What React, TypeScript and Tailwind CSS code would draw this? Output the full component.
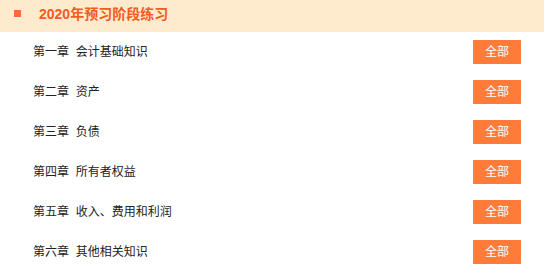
import React from "react";

const chapters = [
  "第一章  会计基础知识",
  "第二章  资产",
  "第三章  负债",
  "第四章  所有者权益",
  "第五章  收入、费用和利润",
  "第六章  其他相关知识",
];

export default function App() {
  return (
    <div
      className="w-[544px] h-[267px] bg-white overflow-hidden"
      style={{ fontFamily: '"Liberation Sans", "Noto Sans CJK SC", sans-serif' }}
    >
      <div className="h-8 bg-[#feeacd] flex items-center">
        <span className="ml-[14px] w-[7px] h-[7px] bg-[#ff6a36] -mt-[5px]" />
        <span className="ml-[18px] text-[14px] font-bold text-[#f55a22] -mt-[4px]">
          2020年预习阶段练习
        </span>
      </div>
      {chapters.map((c) => (
        <div key={c} className="h-10 flex items-center justify-between pl-[33px] pr-[23px]">
          <span className="text-[12px] text-[#222] whitespace-pre">{c}</span>
          <span className="w-12 h-6 bg-[#ff7b3a] text-white text-[12px] flex items-center justify-center">
            全部
          </span>
        </div>
      ))}
    </div>
  );
}
